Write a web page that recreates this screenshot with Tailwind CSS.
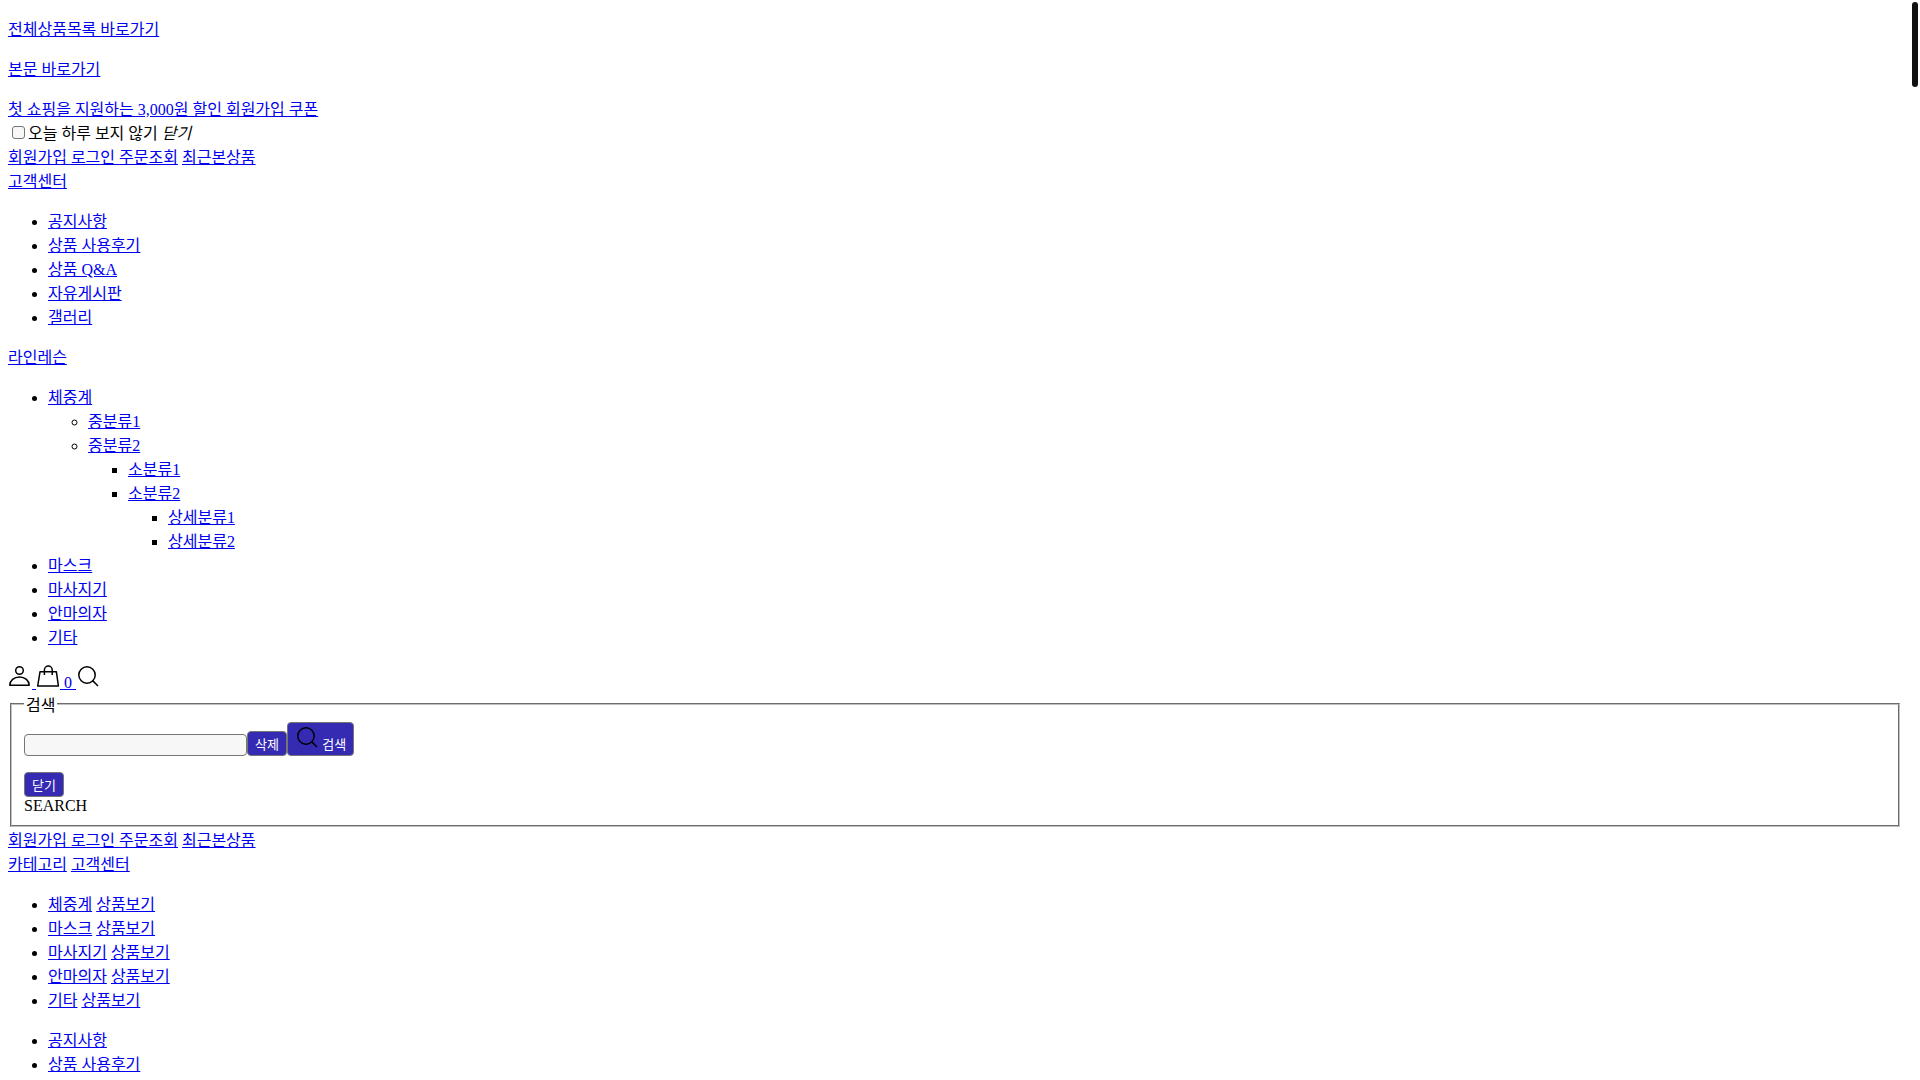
<!DOCTYPE html>
<html lang="ko">
<head>
  <meta charset="UTF-8" />
  <meta name="viewport" content="width=device-width, initial-scale=1.0"/>
  <title>라인레슨</title>
  <script src="https://cdn.jsdelivr.net/npm/@tailwindcss/browser@4"></script>
</head>
<body class="bg-white text-black text-base leading-[normal] font-['Times_New_Roman','Liberation_Serif','Noto_Sans_CJK_KR',serif] [text-rendering:optimizeSpeed] pl-2 pr-[18px] py-4 [&_a]:text-[#0000ee] [&_a]:underline">

  <!-- Skip links -->
  <p class="mb-4"><a href="#category">전체상품목록 바로가기</a></p>
  <p class="mb-4"><a href="#content">본문 바로가기</a></p>

  <!-- Top banner -->
  <div>
    <a href="#">첫 쇼핑을 지원하는 3,000원 할인 회원가입 쿠폰</a>
    <div>
      <input type="checkbox" id="today" class="appearance-none size-[13px] ml-1 mr-[3px] align-baseline border border-[#767676] rounded-[3px] bg-[#f7f7f7] checked:bg-[#352bb3]" /><label for="today">오늘 하루 보지 않기</label>
      <i>닫기</i>
    </div>
  </div>

  <!-- Header -->
  <header>
    <div><a href="#">회원가입 </a><a href="#">로그인 </a><a href="#">주문조회</a> <a href="#">최근본상품</a></div>
    <div><a href="#">고객센터</a></div>
    <ul class="list-disc pl-10 my-4">
      <li><a href="#">공지사항</a></li>
      <li><a href="#">상품 사용후기</a></li>
      <li><a href="#">상품 Q&amp;A</a></li>
      <li><a href="#">자유게시판</a></li>
      <li><a href="#">갤러리</a></li>
    </ul>

    <div><a href="#">라인레슨</a></div>

    <nav id="category">
      <ul class="list-disc pl-10 my-4">
        <li><a href="#">체중계</a>
          <ul class="list-[circle] pl-10">
            <li><a href="#">중분류1</a></li>
            <li><a href="#">중분류2</a>
              <ul class="list-[square] pl-10">
                <li><a href="#">소분류1</a></li>
                <li><a href="#">소분류2</a>
                  <ul class="list-[square] pl-10">
                    <li><a href="#">상세분류1</a></li>
                    <li><a href="#">상세분류2</a></li>
                  </ul>
                </li>
              </ul>
            </li>
          </ul>
        </li>
        <li><a href="#">마스크</a></li>
        <li><a href="#">마사지기</a></li>
        <li><a href="#">안마의자</a></li>
        <li><a href="#">기타</a></li>
      </ul>
    </nav>

    <!-- My page / cart / search -->
    <div>
      <a href="#" aria-label="마이페이지"><svg class="inline align-baseline size-6 text-black" viewBox="0 0 24 24" fill="none" stroke="currentColor" stroke-width="1.5"><circle cx="11.5" cy="6.5" r="3.8"/><path d="M1.8 21.300h19.400c0-4.600-4.200-8.300-9.700-8.300s-9.700 3.700-9.700 8.300z" stroke-linejoin="round"/></svg> </a><a href="#" aria-label="장바구니"><svg class="inline align-baseline size-6 text-black" viewBox="0 0 24 24" fill="none" stroke="currentColor" stroke-width="1.5"><path d="M4 7.800h16.400l2 14.200H1.700z" stroke-linejoin="round"/><path d="M8.400 11V6a3.900 3.900 0 0 1 7.800 0v5"/></svg> 0 </a><a href="#search" aria-label="검색"><svg class="inline align-baseline size-6 text-black" viewBox="0 0 24 24" fill="none" stroke="currentColor" stroke-width="1.5"><circle cx="11" cy="11" r="8.200"/><path d="M16.600 16.600l5.400 5.400"/></svg></a>
    </div>

    <!-- Search form -->
    <form id="search">
      <fieldset class="mx-[2px] px-3 pt-[6px] pb-[10px] border-2 [border-style:groove] border-[#c0c0c0]">
        <legend class="px-[2px]">검색</legend>
        <div class="mb-4">
          <input type="text" aria-label="검색어" class="w-[223px] h-[22px] px-1 align-baseline text-[13px] bg-[#f7f7f7] border border-[#767676] rounded-[4px]" /><button type="button" class="px-[7px] py-[2px] text-[13px] text-white bg-[#352bb3] border border-[#767676] rounded-[4px]">삭제</button><button type="button" class="px-[7px] py-[2px] text-[13px] text-white bg-[#352bb3] border border-[#767676] rounded-[4px]"><svg class="inline align-baseline size-6 text-black" viewBox="0 0 24 24" fill="none" stroke="currentColor" stroke-width="1.5"><circle cx="11" cy="11" r="8.200"/><path d="M16.600 16.600l5.400 5.400"/></svg> 검색</button>
        </div>
        <button type="button" class="block px-[7px] py-[2px] text-[13px] text-white bg-[#352bb3] border border-[#767676] rounded-[4px]">닫기</button>
        <div>SEARCH</div>
      </fieldset>
    </form>
  </header>

  <!-- Mobile menu -->
  <div id="content">
    <div><a href="#">회원가입 </a><a href="#">로그인 </a><a href="#">주문조회</a> <a href="#">최근본상품</a></div>
    <div><a href="#">카테고리</a> <a href="#">고객센터</a></div>
    <ul class="list-disc pl-10 my-4">
      <li><a href="#">체중계</a> <a href="#">상품보기</a></li>
      <li><a href="#">마스크</a> <a href="#">상품보기</a></li>
      <li><a href="#">마사지기</a> <a href="#">상품보기</a></li>
      <li><a href="#">안마의자</a> <a href="#">상품보기</a></li>
      <li><a href="#">기타</a> <a href="#">상품보기</a></li>
    </ul>
    <ul class="list-disc pl-10">
      <li><a href="#">공지사항</a></li>
      <li><a href="#">상품 사용후기</a></li>
    </ul>
  </div>

  <!-- Scroll indicator -->
  <div class="fixed top-[2px] right-[2px] w-[6px] h-[85px] rounded-full bg-[#111]" aria-hidden="true"></div>

</body>
</html>
